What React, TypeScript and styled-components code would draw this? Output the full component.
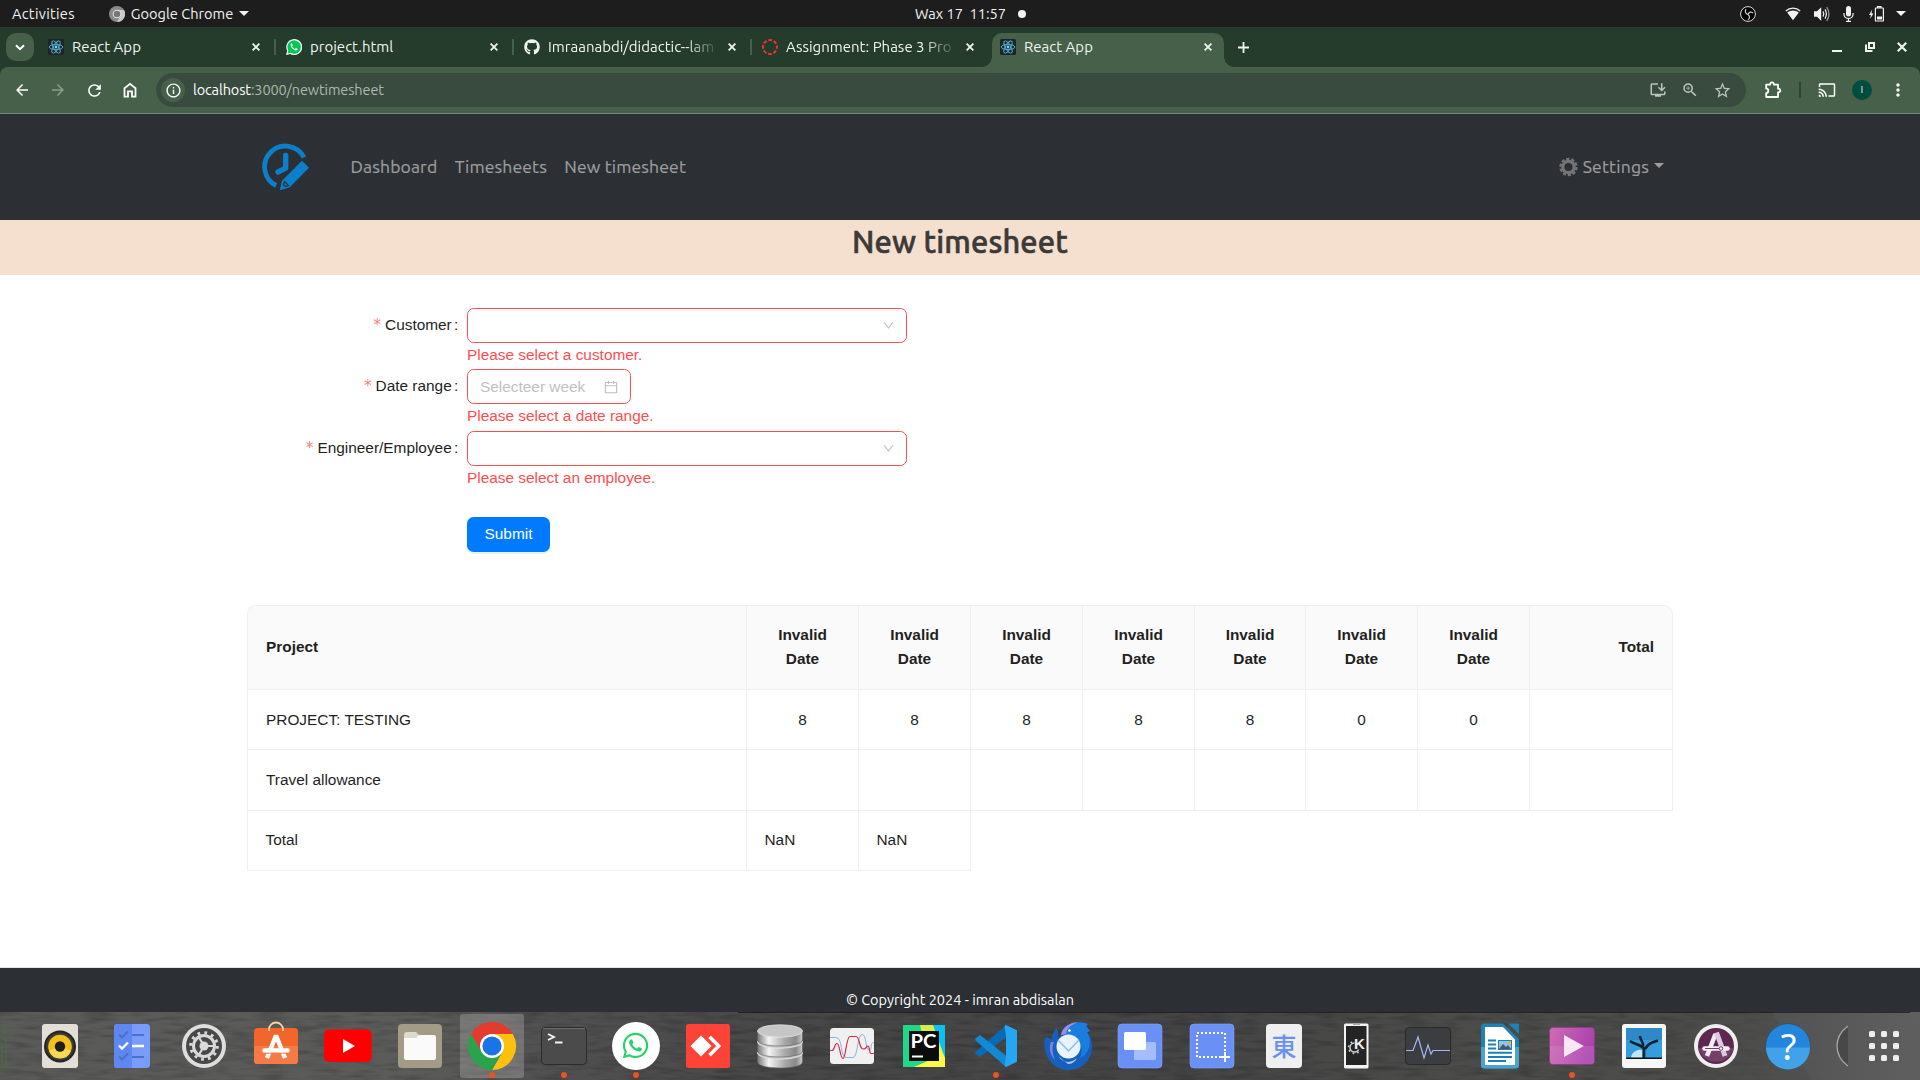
import React from "react";
import styled, { createGlobalStyle, css } from "styled-components";
import {
  MdArrowBack, MdArrowForward, MdRefresh, MdInfoOutline, MdOutlineInstallDesktop,
  MdZoomIn, MdStarBorder, MdOutlineCast, MdMoreVert,
} from "react-icons/md";
import { FaGithub, FaWhatsapp } from "react-icons/fa";
import { AiOutlineDown, AiOutlineCalendar } from "react-icons/ai";

const ui = `"Ubuntu", "Noto Sans", sans-serif`;
const sans = `"Liberation Sans", Arial, sans-serif`;

const GlobalStyle = createGlobalStyle`
  *, *::before, *::after { box-sizing: border-box; }
  html, body { margin: 0; padding: 0; background: #fff; }
  body { width: 1920px; height: 1080px; overflow: hidden; font-family: ${ui}; }
  svg { display: block; flex: none; }
`;

const Screen = styled.div`
  width: 1920px; height: 1080px; display: flex; flex-direction: column; overflow: hidden; background: #fff;
`;
const Label = styled.span<{ $s?: number }>`
  white-space: nowrap; letter-spacing: ${(p) => p.$s ?? 0}px;
`;

const TopBar = styled.header`
  height: 27px; flex: none; background: #1d1d1d; color: #f2f2f2; font-size: 14.6px; line-height: 26px;
  display: grid; grid-template-columns: 915px 1fr auto; align-items: center;
`;
const TopLeft = styled.div`display: flex; align-items: center; padding-left: 12px;`;
const AppMenu = styled.div`display: flex; align-items: center; margin-left: 34px; gap: 6px;`;
const Clock = styled.div`display: flex; align-items: center; gap: 12px;`;
const Dot = styled.i`width: 8px; height: 8px; border-radius: 50%; background: #f2f2f2;`;
const Tray = styled.div`display: flex; align-items: center; padding-right: 14px; color: #f2f2f2;`;
const Gap = styled.span<{ $w: number }>`width: ${(p) => p.$w}px; flex: none;`;

const TabStrip = styled.div`
  height: 40px; flex: none; background: #253b2b; display: flex; align-items: flex-end; padding-left: 6px; color: #f0f4f0;
`;
const TabSearch = styled.button`
  width: 28px; height: 28px; border: 0; padding: 0; border-radius: 10px; background: #466049; color: #fff;
  display: grid; place-items: center; margin: 0 6px 6px 0;
`;
const Tab = styled.div<{ $active?: boolean; $sep?: boolean }>`
  width: 232px; height: 34px; margin-right: 6px; padding: 0 8px 6px; position: relative;
  display: flex; align-items: center; font-size: 15px;
  ${(p) => p.$active && css`
    background: #466049; border-radius: 10px 10px 0 0;
    &::before, &::after { content: ""; position: absolute; bottom: 0; width: 10px; height: 10px; }
    &::before { left: -10px; background: radial-gradient(circle at 0 0, transparent 9.5px, #466049 10px); }
    &::after { right: -10px; background: radial-gradient(circle at 100% 0, transparent 9.5px, #466049 10px); }
  `}
  ${(p) => p.$sep && css`
    &::after { content: ""; position: absolute; right: -4px; top: 6px; width: 2px; height: 16px; background: #466049; }
  `}
`;
const TabTitle = styled.span<{ $fade?: boolean }>`
  width: 172px; margin-left: 8px; padding-bottom: 2px; display: flex;
  ${(p) => p.$fade && css`mask-image: linear-gradient(90deg, #000 138px, transparent 171px);`}
`;
const TabClose = styled.span`margin-left: auto; width: 16px; height: 16px; display: grid; place-items: center;`;
const NewTab = styled.span`width: 26px; height: 34px; padding-bottom: 6px; display: grid; place-items: center;`;
const WindowButtons = styled.div`
  margin-left: auto; height: 34px; width: 75px; margin-right: 13px; padding-bottom: 6px; display: flex; justify-content: space-between; align-items: center;
`;

const ToolbarWrap = styled.div`height: 47px; flex: none; background: #253b2b;`;
const Toolbar = styled.div`
  height: 47px; background: #466049; border-radius: 8px 8px 0 0; border-bottom: 1px solid #71877b;
  display: flex; align-items: center; padding-left: 4px; color: #fff;
`;
const ToolButton = styled.span<{ $dim?: boolean }>`
  width: 36px; height: 34px; flex: none; display: grid; place-items: center; color: ${(p) => (p.$dim ? "#8c9d8e" : "#fff")};
`;
const Omnibox = styled.div`
  width: 1590px; height: 34px; flex: none; margin-left: 8px; border-radius: 17px; background: #394b3e; padding: 0 8px 0 5px;
  display: flex; align-items: center; font-size: 14.5px; line-height: 34px; color: #adb7af;
`;
const SiteInfo = styled.span`
  width: 24px; height: 24px; border-radius: 50%; background: #466049; color: #fff; display: grid; place-items: center; margin-right: 8px;
`;
const Host = styled.span`color: #fff;`;
const OmniIcons = styled.span`
  margin-left: auto; display: flex; color: #bcc5bd;
  span { width: 32px; display: grid; place-items: center; }
`;
const Extras = styled.div`display: flex; align-items: center; padding-left: 17.5px;`;
const Divider = styled.i`width: 2px; height: 16px; background: #2c4632; margin: 0 17px;`;
const Avatar = styled.span`
  width: 20px; height: 20px; border-radius: 50%; background: #004d40; color: #c4d5d1; font-size: 10px; font-weight: 500; line-height: 20px; text-align: center;
  margin: 0 16px 0 16.5px;
`;

const Navbar = styled.nav`
  height: 106px; flex: none; background: #2c3034; color: #9b9d9e; font-size: 17.6px; display: flex; align-items: center; padding: 0 256px 0 262px;
`;
const NavLinks = styled.div`display: flex; gap: 17.4px; margin-left: 41.5px; flex: 1; padding-bottom: 2px; -webkit-text-stroke: 0.2px currentColor;`;
const SettingsMenu = styled.div`display: flex; align-items: center;`;
const SettingsText = styled(Label)`padding-bottom: 2px; -webkit-text-stroke: 0.2px currentColor;`;
const Caret = styled.i<{ $size?: number }>`
  width: 0; height: 0; border: ${(p) => p.$size ?? 5}px solid transparent; border-bottom: 0; border-top-color: currentColor;
`;
const MenuCaret = styled(Caret)`margin-bottom: 4px;`;
const PageTitle = styled.h2`
  margin: 0; height: 55px; flex: none; background: #f5e0d0; color: #3b3a38; font-size: 30.8px; line-height: 43px; font-weight: 500; text-align: center;
  -webkit-text-stroke: 0.6px #3b3a38;
`;

const Content = styled.main`
  flex: 1; min-height: 0; padding: 33px 247px 0; font-family: ${sans}; font-size: 15.4px; color: #1f1f1f; display: flex; flex-direction: column;
`;
const Form = styled.form`display: flex; flex-direction: column; height: 297px;`;
const FormRow = styled.div<{ $h: number }>`
  height: ${(p) => p.$h}px; flex: none; display: grid; grid-template-columns: 220px 440px; line-height: 24px;
`;
const FieldLabel = styled.label`
  height: 34px; display: flex; align-items: center; justify-content: flex-end; padding-right: 8.8px;
`;
const Star = styled.span`color: #ff4d4f; margin-right: 4px; font-family: "DejaVu Sans", sans-serif; opacity: 0.75; font-size: 15.4px;`;
const Control = styled.div<{ $w: number }>`
  width: ${(p) => p.$w}px; height: 35px; border: 1px solid #ff4d4f; border-radius: 6.6px; background: #fff;
  display: flex; align-items: center; justify-content: space-between; padding: 0 11px 0 12px; color: #bfbfbf;
`;
const ErrorText = styled.div`color: #ff4d4f;`;
const Submit = styled.button`
  margin: 24px 0 0 220px; width: 83px; height: 35px; border: 0; border-radius: 6.6px; background: #007bff; color: #fff; padding: 0 0 2px;
  font: inherit; box-shadow: 0 2px 0 rgba(5, 145, 255, 0.1);
`;

const Table = styled.table`
  width: 1426px; table-layout: fixed; border-collapse: separate; border-spacing: 0;
  border-left: 1px solid #f0f0f0; border-top: 1px solid #f0f0f0; border-radius: 8.8px 8.8px 0 0; line-height: 24px;
`;
const FirstCol = styled.col`width: 499px;`;
const DayCol = styled.col<{ $w: number }>`width: ${(p) => p.$w}px;`;
const Cell = styled.td<{ $align?: string }>`
  padding: 0 18px; height: 60px; border-right: 1px solid #f0f0f0; border-bottom: 1px solid #f0f0f0; text-align: ${(p) => p.$align ?? "left"};
`;
const HeadCell = styled(Cell).attrs({ as: "th" })`
  height: 84px; padding-bottom: 2px; background: #fafafa; font-weight: 700;
  &:first-child { border-top-left-radius: 8.8px; }
  &:last-child { border-top-right-radius: 8.8px; }
`;
const TallCell = styled(Cell)`height: 61px;`;
const SummaryCell = styled(Cell)`padding: 0 17.5px 2px;`;

const Footer = styled.footer`
  height: 45px; flex: none; background: #2c3034; border-top: 1px solid #e3e4e4; color: #fff; font-size: 14.5px; line-height: 64px; text-align: center;
`;

const Dock = styled.div`
  height: 68px; flex: none; position: relative; display: flex; overflow: hidden;
  background: linear-gradient(90deg, #5a5a59 0, #5b5b5a 420px, #505050 560px, #474747 800px, #454545 1200px, #4c4c4b 1500px, #4c4c4b 1740px, #525252 1830px, #5a5a5a 100%);
  &::before { content: ""; position: absolute; left: 738px; width: 1172px; top: 0; height: 1px; background: #242424; }
`;
const Texture = styled.svg`position: absolute; inset: 0; opacity: 0.24;`;
const DockCell = styled.div<{ $active?: boolean; $running?: boolean }>`
  width: 72px; height: 68px; position: relative; flex: none; display: grid; justify-items: center; padding-top: 10px; align-content: start;
  ${(p) => p.$active && css`&::before { content: ""; position: absolute; left: 4px; top: 2px; width: 64px; height: 64px; border-radius: 3px; background: rgba(255,255,255,0.2); }`}
  ${(p) => p.$running && css`&::after { content: ""; position: absolute; left: 33px; top: 60px; width: 6px; height: 6px; border-radius: 50%; background: #e95420; }`}
  svg { position: relative; overflow: visible; }
`;
const DockEdge = styled.div`width: 24px; flex: none; position: relative; overflow: hidden;`;
const LeftEdge = styled(DockEdge)`padding-top: 10px;`;
const AppGrid = styled.div`
  margin-left: 21px; padding-top: 19px; position: relative; display: grid; grid-template-columns: repeat(3, 6px); grid-auto-rows: 6px; gap: 6px; align-content: start;
  i { width: 6px; height: 6px; border-radius: 1.5px; background: #eee; }
`;

const ReactFavicon = () => (
  <svg width="16" height="16" viewBox="0 0 16 16">
    <rect width="16" height="16" rx="1.5" fill="#20232a" />
    <g fill="none" stroke="#53b5d0" strokeWidth="0.9">
      <ellipse cx="8" cy="8" rx="6.8" ry="2.6" />
      <ellipse cx="8" cy="8" rx="6.8" ry="2.6" transform="rotate(60 8 8)" />
      <ellipse cx="8" cy="8" rx="6.8" ry="2.6" transform="rotate(120 8 8)" />
    </g>
    <circle cx="8" cy="8" r="1.4" fill="#61dafb" />
  </svg>
);
const WhatsappFavicon = () => (
  <svg width="16" height="16" viewBox="0 0 16 16">
    <path d="M0 16 1.2 11.8A8 8 0 1 1 4.3 15Z" fill="#fff" />
    <path d="M1.5 14.6 2.4 11.5A6.7 6.7 0 1 1 4.7 13.8Z" fill="#00c853" />
    <path d="M5.6 4.2c-.7.3-1.2 1.2-.9 2.3.6 2.3 2.6 4.3 4.9 4.9 1.2.2 2.1-.4 2.2-1.3l-1.9-1-.9.9C7.8 9.500 6.6 8.3 6.1 7.1l.8-.9Z" fill="#fff" />
  </svg>
);
const CanvasFavicon = () => (
  <svg width="16" height="16" viewBox="0 0 16 16">
    <circle cx="8" cy="8" r="7" fill="none" stroke="#e8352e" strokeWidth="2" strokeDasharray="3.7 1.798" strokeDashoffset="1.85" />
  </svg>
);
const Cross = ({ size = 8, w = 1.8 }: { size?: number; w?: number }) => (
  <svg width={size} height={size} viewBox="0 0 8 8"><path d="M.6.6 7.4 7.4M7.4.6.6 7.4" stroke="currentColor" strokeWidth={w} /></svg>
);
const HomeIcon = () => (
  <svg width="14" height="16" viewBox="0 0 14 16">
    <path d="M1.5 6.2 7 1.8 12.5 6.2V14.6H9V9.4H5V14.6H1.5Z" fill="none" stroke="currentColor" strokeWidth="1.8" />
  </svg>
);
const PuzzleIcon = () => (
  <svg width="18" height="18" viewBox="0 0 18 18">
    <path d="M2.2 3.6H6.2Q6 1.4 8 1.4T9.8 3.6H14V7.7Q16.3 7.6 16.3 9.5T14 11.4V16H2.2V12.2Q4.3 11.8 4.3 9.7T2.2 7.4Z" fill="none" stroke="currentColor" strokeWidth="1.8" strokeLinejoin="round" />
  </svg>
);

const TrayIcons = () => (
  <Tray>
    <svg width="16" height="16" viewBox="0 0 16 16">
      <circle cx="8" cy="8" r="7.4" fill="#000" stroke="#ddd" strokeWidth="1" />
      <g fill="none" stroke="#ccc" strokeWidth="1.2">
        <path d="M8 8.500C5.500 8 4.500 5.500 6 3.200" />
        <path d="M8 8.500C8.700 6 11.200 5.300 13 7" />
        <path d="M8 8.500c2 1.500 2 4-.2 5.300" />
      </g>
    </svg>
    <Gap $w={29} />
    <svg width="16" height="14" viewBox="0 0 16 14">
      <path d="M.8 4C4.8.2 11.2.2 15.2 4" fill="none" stroke="#f2f2f2" strokeWidth="1.3" />
      <path d="M2.2 5.6C5.5 2.9 10.5 2.9 13.8 5.6L8 13.3Z" fill="#f2f2f2" />
    </svg>
    <Gap $w={13} />
    <svg width="16" height="16" viewBox="0 0 16 16">
      <path d="M0 5.2H3L7.2 1.2V14.8L3 10.8H0Z" fill="#f2f2f2" />
      <g fill="none" stroke="#f2f2f2" strokeWidth="1.2"><path d="M9 5.4Q10.6 8 9 10.6M11 3.4Q13.8 8 11 12.6" /><path d="M12.7 1.2Q17.3 8 12.7 14.8" opacity=".6" /></g>
    </svg>
    <Gap $w={13} />
    <svg width="11" height="16" viewBox="0 0 11 16">
      <rect x="3" y="0" width="5" height="10.5" rx="2.5" fill="#f2f2f2" />
      <path d="M1 7v1.500a4.500 4 0 0 0 9 0V7M5.500 12.500V15.300M3 15.400H8" fill="none" stroke="#f2f2f2" strokeWidth="1.2" />
    </svg>
    <Gap $w={15} />
    <svg width="16" height="16" viewBox="0 0 16 16">
      <path d="M3.2 3.5 0 9H1.9L1.2 12.8 4.5 7.4H2.5Z" fill="#f2f2f2" />
      <path d="M8.5 2V.6H12V2M7 2H13.8Q14.4 2 14.4 2.6V14.4Q14.4 15 13.8 15H7Q6.4 15 6.4 14.4V2.6Q6.4 2 7 2Z" fill="none" stroke="#f2f2f2" strokeWidth="1.2" />
      <rect x="8" y="10.5" width="5" height="3" fill="#f2f2f2" />
    </svg>
    <Gap $w={11} />
    <Caret />
  </Tray>
);

const Logo = () => (
  <svg width="47" height="48" viewBox="0 0 47 48">
    <path d="M14.2 42.5A20.8 20.8 0 1 1 42 14.5" fill="none" stroke="#0b7fcb" strokeWidth="4.8" />
    <path d="M23.7 12.5V25.2L16 29" fill="none" stroke="#0b7fcb" strokeWidth="5.4" strokeLinecap="round" strokeLinejoin="round" />
    <path d="M40 18.8 46 24.8 27.5 43.5 18.8 46.3 20.5 38.2Z" fill="#0b7fcb" stroke="#0b7fcb" strokeWidth="1.5" strokeLinejoin="round" />
    <path d="M22.6 38.6 26.4 42.400 23.4 43.6 21.4 41.6Z" fill="none" stroke="#2c3034" strokeWidth="1.3" />
  </svg>
);
const Gear = () => (
  <svg width="19" height="20" viewBox="0 0 20 20">
    <circle cx="10" cy="10" r="6" fill="none" stroke="#737577" strokeWidth="3.4" />
    <circle cx="10" cy="10" r="8.5" fill="none" stroke="#737577" strokeWidth="2.4" strokeDasharray="3.4 1.940" />
  </svg>
);

const shapes: Record<string, React.ReactNode> = {
  speaker: <>
    <rect x="6" y="2" width="36" height="44" rx="3" fill="#e3dfd6" />
    <circle cx="24" cy="24.5" r="16" fill="#23232a" /><circle cx="24" cy="24.5" r="14" fill="#3c3a35" />
    <circle cx="24" cy="24.5" r="11.8" fill="#f1c01d" /><path d="M13 29a11.800 11.800 0 0 0 22 0L24 24Z" fill="#f8d951" /><circle cx="24" cy="24.5" r="5.2" fill="#1d1d1d" />
  </>,
  todo: <>
    <rect x="6" y="2" width="36" height="44" rx="3.5" fill="#799cfa" /><path d="M9.500 2H24V46H9.500A3.500 3.500 0 0 1 6 42.500V5.500A3.500 3.500 0 0 1 9.500 2Z" fill="#5e87f2" />
    <g fill="none" strokeWidth="2"><path d="m11 12.500 3 3 6-6M24 13H36M11 34.500l3 3 6-6M24 35H36" stroke="#4c70c8" /><path d="m11 23.500 3 3 6-6M24 24H36" stroke="#fff" strokeWidth="2.3" /></g>
  </>,
  settings: <>
    <circle cx="24" cy="24" r="22" fill="#dedede" /><circle cx="24" cy="24" r="18" fill="#484848" />
    <circle cx="24" cy="24" r="10.5" fill="none" stroke="#d9d9d9" strokeWidth="3" /><circle cx="24" cy="24" r="13.3" fill="none" stroke="#d9d9d9" strokeWidth="3" strokeDasharray="2.8 4.160" />
    <circle cx="24" cy="24" r="4.5" fill="#d9d9d9" /><path d="M24 24H35M24 24 18.500 14.500M24 24 18.500 33.500" stroke="#d9d9d9" strokeWidth="2.2" />
  </>,
  software: <>
    <rect x="2" y="6" width="44" height="36" rx="3.5" fill="#f4652b" /><path d="M2 24H46V38.500A3.500 3.500 0 0 1 42.500 42H5.500A3.500 3.500 0 0 1 2 38.500Z" fill="#f57a46" />
    <path d="M17 9V7.500a7 7 0 0 1 14 0V9" fill="none" stroke="#f6d2a6" strokeWidth="1.8" />
    <path d="M15 36 24 13.500 33 36" fill="none" stroke="#fff" strokeWidth="4.5" strokeLinejoin="bevel" /><path d="M12.500 28.500H35.500" stroke="#fff" strokeWidth="4.5" strokeLinecap="round" />
    <path d="M12 31.200H36" stroke="#f57a46" strokeWidth="1" />
  </>,
  youtube: <><rect x="0" y="7.5" width="47.7" height="32.5" rx="5" fill="#fe0000" /><path d="M19 17 31 24 19 31Z" fill="#fff" /></>,
  files: <>
    <rect x="2" y="2" width="44" height="44" rx="4" fill="#a39b85" /><path d="M8 13a3 3 0 0 1 3-3H20l3 3V20H8Z" fill="#dcd9ce" />
    <path d="M8 16H20L23 13H38a2 2 0 0 1 2 2V36a2 2 0 0 1-2 2H10a2 2 0 0 1-2-2Z" fill="#fafafa" />
  </>,
  chrome: <>
    <path d="M24 24V12H44.800A24 24 0 0 1 24 48L34.400 30Z" fill="#fcc10d" />
    <path d="M3.200 12 13.600 30 34.400 30 24 48A24 24 0 0 1 3.200 12Z" fill="#2ba24c" /><path d="M24 12H44.800A24 24 0 0 0 3.200 12L13.600 30Z" fill="#e33b2e" />
    <circle cx="24" cy="24" r="12" fill="#fff" /><circle cx="24" cy="24" r="9.6" fill="#1a73e8" />
  </>,
  terminal: <><rect x="1.5" y="5.5" width="45" height="37" rx="3.5" fill="#4b4b4b" stroke="#2c2c2c" /><path d="M3 6.600H45" stroke="#777" strokeWidth=".8" /><path d="m8 12 6 3-6 3M15 20.500H22.500" fill="none" stroke="#f4f4f4" strokeWidth="1.8" /></>,
  whatsapp: <><circle cx="24" cy="24" r="24" fill="#fff" /><FaWhatsapp x="9" y="9" size={29} color="#25d366" /></>,
  anydesk: <><rect x="2" y="2" width="44" height="44" rx="2.5" fill="#fd4237" /><path d="M6.500 24 17 13.500 27.500 24 17 34.500Z" fill="#fff" /><path d="m25.500 14.800 9.200 9.200-9.200 9.200" fill="none" stroke="#fff" strokeWidth="3.6" /></>,
  database: <>
    <defs><linearGradient id="steel"><stop offset="0" stopColor="#777" /><stop offset=".25" stopColor="#f5f5f5" /><stop offset=".6" stopColor="#aaa" /><stop offset=".85" stopColor="#888" /><stop offset="1" stopColor="#ccc" /></linearGradient></defs>
    {[29, 18, 7].map((y) => <g key={y}><path d={`M1.500 ${y + 2}V${y + 11}C1.500 ${y + 19} 46.500 ${y + 19} 46.500 ${y + 11}V${y + 2}Z`} fill="url(#steel)" stroke="#5d5d5d" strokeWidth=".6" /><ellipse cx="24" cy={y + 2} rx="22.5" ry="6.2" fill="#c6c6c6" stroke="#ededed" strokeWidth=".7" /></g>)}
  </>,
  monitor: <><rect x="2" y="6" width="44" height="36" rx="3.5" fill="#f0f0f0" /><path d="M2 15.500H8C15 15.500 12 35.500 18 35.500H25C30 35.500 29 12.500 34 12.500S37 28 41 28 41 20.500 46 20.500" fill="none" stroke="#85b6e0" strokeWidth="1" /><path d="M2 28.500H4C7 28.500 6 21.500 9 21.500S12 36.500 15 36.500 18 14.500 22 14.500H28C32 14.500 31 27 35 27S38 24 40 24 41 31.500 43 31.500H46" fill="none" stroke="#d8274e" strokeWidth="1.2" /></>,
  pycharm: <>
    <rect x="3" y="3" width="42" height="42" fill="#21d789" /><path d="M20 3H34L45 32V45H30Z" fill="#d5ef48" /><path d="M33 3H45V36Z" fill="#07c3f2" /><path d="M39 25 45 36V45H14L30 38Z" fill="#fcf84a" />
    <rect x="9" y="9" width="30" height="30" fill="#0b0b0b" /><text x="10.5" y="26" fill="#fff" fontFamily="Lato, sans-serif" fontWeight="700" fontSize="18.5" textLength="26" lengthAdjust="spacingAndGlyphs">PC</text><rect x="12" y="33.5" width="11" height="2" fill="#fff" />
  </>,
  vscode: <>
    <path d="M3 30.500 34 3 36 14 8 35 3.300 31.800Z" fill="#0a6bb5" /><path d="M3.400 16.500 8 13 34.500 34 34 45 3.500 18.500Z" fill="#1189d3" /><path d="M34 3 45 8.300V39.700L34 45 32.500 44 34 34V14L32.500 4Z" fill="#26a6f2" />
  </>,
  thunderbird: <>
    <path d="M12 5.500C10 10 8 12 7.500 18 5 15 2 15 .5 17-1 36 10 48 24 48 38 48 48 38 48 25 48 18 46 13 43 10L46 9 42 4 44 2C30-2 18 3 17 13L14 17C15 12 14 8 12 5.500Z" fill="#1560bd" />
    <path d="M17 13C18 3 30-2 44 2L42 4 46 9 43 10C49 20 45 32 36 36 41 26 36 14 17 13Z" fill="#1c7de0" />
    <path d="M17 13C19 5 26 .3 34 .3 26 3 22 8 22 12Z" fill="#a58be8" /><path d="M7 20C4 27 7 34 11 38 8 30 8 24 10 20Z" fill="#7d80e3" />
    <path d="M14 34C20 42 28 41 33 36 31 40 28 42 24 42Z" fill="#9fc9f5" />
    <circle cx="24.500" cy="24.500" r="12" fill="#e8f3fd" /><path d="M14 18 24.500 29 35 18" fill="none" stroke="#8bbdea" strokeWidth="1.5" /><circle cx="25.500" cy="8.500" r="1.3" fill="#fff" />
  </>,
  windows: <><rect x="2" y="2" width="44" height="44" rx="4" fill="#6a90f6" stroke="#86a6fa" strokeWidth=".6" /><rect x="18" y="20" width="22" height="18" rx="1.5" fill="#a5bdfb" /><rect x="8" y="10" width="22" height="18" rx="1.5" fill="#fff" /></>,
  screenshot: <><rect x="2" y="2" width="44" height="44" rx="4" fill="#6a90f6" stroke="#86a6fa" strokeWidth=".6" /><rect x="9" y="11" width="28" height="24" fill="none" stroke="#fff" strokeWidth="2" strokeDasharray="2 2" /><path d="M37 30V40M32 35H42" stroke="#fff" strokeWidth="2" /></>,
  input: <><rect x="6" y="2" width="36" height="44" rx="4" fill="#efefef" /><text x="24" y="33.5" textAnchor="middle" fill="#6a90f6" fontFamily='"Noto Sans CJK JP", sans-serif' fontSize="25" fontWeight="500">東</text></>,
  phone: <><rect x="12" y="1.5" width="24.5" height="45" rx="1.5" fill="#f3f3f3" /><rect x="14" y="4" width="20.5" height="39" fill="#242424" /><rect x="21" y="1.5" width="7" height="1.5" fill="#aaa" />
    <circle cx="22.500" cy="25.500" r="4.500" fill="none" stroke="#ccc" strokeWidth="1.6" /><circle cx="22.500" cy="25.500" r="6" fill="none" stroke="#ccc" strokeWidth="1.6" strokeDasharray="1.7 3" /><rect x="22.5" y="16" width="10" height="11.5" fill="#242424" /><text x="22" y="27" fill="#f0f0f0" fontFamily={sans} fontWeight="700" fontSize="15">K</text></>,
  pulse: <><rect x="1.5" y="5.5" width="45" height="37" rx="3.5" fill="#3c3d41" stroke="#2a2a2a" /><path d="M2 28.500H9L14 15 20 36 24 23 27 32 29 28.500H46" fill="none" stroke="#a3b8f5" strokeWidth="1.2" /></>,
  writer: <>
    <path d="M8.500 1.500H27L43 17V43a3.500 3.500 0 0 1-3.500 3.500H8.500A3.500 3.500 0 0 1 5 43V5A3.500 3.500 0 0 1 8.500 1.500Z" fill="#1c83b4" /><path d="M5 25H43V43a3.500 3.500 0 0 1-3.500 3.500H8.500A3.500 3.500 0 0 1 5 43Z" fill="#49a3cc" /><path d="M32 1.500H43V12Z" fill="#1c83b4" />
    <path d="M9 5H27L39 17.500V43H9Z" fill="#fff" /><path d="M12 18.500H20M12 22.500H20M12 26.500H20M12 30.800H36M12 35H36M12 39H30" stroke="#1c7fb9" strokeWidth="2" /><rect x="22.5" y="18.5" width="13" height="9" fill="#8cc6ea" stroke="#1c7fb9" /><path d="m23 27 4-5 3 3 2-2 3 4Z" fill="#555" /><circle cx="33.500" cy="20.500" r="1.5" fill="#f5b400" />
  </>,
  player: <>
    <defs><linearGradient id="orchid" x1="0" y1="0" x2="1" y2=".3"><stop offset="0" stopColor="#cf6cb4" /><stop offset="1" stopColor="#ac41ae" /></linearGradient></defs>
    <rect x="1.5" y="5.5" width="45" height="37" rx="3.5" fill="url(#orchid)" stroke="#8d3b8d" strokeWidth=".8" /><path d="M2 24H46V40Q46 42 43 42H5Q2 42 2 40Z" fill="#fff" opacity=".1" /><path d="M16 13 35.800 24 16 35Z" fill="#f8e8f5" />
  </>,
  photos: <><rect x="2" y="2" width="44" height="44" rx="3" fill="#f7f7f7" /><rect x="6" y="6" width="36" height="31" rx="1" fill="#369ddd" /><rect x="6" y="6" width="36" height="12" fill="#2a7cbd" opacity=".6" /><path d="M11 36a9 9 0 0 1 11-8V36Z" fill="#bfe6fa" /><path d="M6 35.500H42V36Q42 37 41 37H7Q6 37 6 36Z" fill="#0d1418" /><path d="M24 36V27C21 22 15 23 10 19M23 25C24 20 20 18 20 14M25 27C28 22 30 21 38 18.500" fill="none" stroke="#10222d" strokeWidth="2.6" /></>,
  updater: <><circle cx="24" cy="24" r="22" fill="#efefef" /><circle cx="24" cy="24" r="18" fill="#5e2750" /><path d="M6.500 26H41.500A18 18 0 0 1 6.500 26Z" fill="#734068" /><path d="M15 34 23.500 12" stroke="#f2ecf2" strokeWidth="4.5" /><path d="M24.500 10.500 33 34" stroke="#dcc8e4" strokeWidth="5" /><path d="M12.500 26.500H35.500" stroke="#f6f2f6" strokeWidth="4.5" strokeLinecap="round" /><path d="M13 26.500H27" stroke="#734068" strokeWidth="1" /><circle cx="29" cy="26.500" r="1.8" fill="none" stroke="#734068" /></>,
  help: <><circle cx="24" cy="24" r="22.3" fill="#2385dc" stroke="#2b4a66" strokeWidth=".6" /><path d="M2 25.500H46A22 22 0 0 1 2 25.500Z" fill="#41a2ea" /><text x="24.5" y="37.5" textAnchor="middle" fill="#fff" fontFamily='"Noto Sans", sans-serif' fontSize="36">?</text></>,
};

const dockItems: { icon: string; active?: boolean; running?: boolean }[] = [
  { icon: "speaker" }, { icon: "todo" }, { icon: "settings" }, { icon: "software" }, { icon: "youtube" }, { icon: "files" },
  { icon: "chrome", active: true, running: true }, { icon: "terminal", running: true }, { icon: "whatsapp", running: true },
  { icon: "anydesk" }, { icon: "database" }, { icon: "monitor" }, { icon: "pycharm" }, { icon: "vscode", running: true },
  { icon: "thunderbird" }, { icon: "windows" }, { icon: "screenshot" }, { icon: "input" }, { icon: "phone" }, { icon: "pulse" },
  { icon: "writer" }, { icon: "player", running: true }, { icon: "photos" }, { icon: "updater" }, { icon: "help" },
];

const tabs = [
  { title: "React App", icon: <ReactFavicon /> },
  { title: "project.html", icon: <WhatsappFavicon /> },
  { title: "Imraanabdi/didactic--lam", icon: <FaGithub size={16} />, fade: true },
  { title: "Assignment: Phase 3 Pro", icon: <CanvasFavicon />, fade: true },
  { title: "React App", icon: <ReactFavicon />, active: true },
];

const hours = [8, 8, 8, 8, 8, 0, 0];
const dayWidths = [112, 112, 112, 112, 111, 112, 112];

export default function App() {
  return (
    <Screen>
      <GlobalStyle />
      <TopBar>
        <TopLeft>
          <Label $s={0.3}>Activities</Label>
          <AppMenu>
            <svg width="16" height="16" viewBox="0 0 16 16"><circle cx="8" cy="8" r="8" fill="#8a8a8a" /><path d="M8 4H15A8 8 0 0 1 8 16L12 9Z" fill="#c9c9c9" /><circle cx="8" cy="8" r="4.3" fill="#e6e6e6" /><circle cx="8" cy="8" r="3.3" fill="#777" /></svg>
            <Label>Google Chrome</Label>
            <Caret />
          </AppMenu>
        </TopLeft>
        <Clock><Label>Wax 17&nbsp; 11:57</Label><Dot /></Clock>
        <TrayIcons />
      </TopBar>

      <TabStrip>
        <TabSearch><svg width="10" height="7" viewBox="0 0 10 7"><path d="m1 1.200 4 4 4-4" fill="none" stroke="currentColor" strokeWidth="2" /></svg></TabSearch>
        {tabs.map((t, i) => (
          <Tab key={i} $active={t.active} $sep={i < 3}>
            {t.icon}
            <TabTitle $fade={t.fade}><Label>{t.title}</Label></TabTitle>
            <TabClose><Cross /></TabClose>
          </Tab>
        ))}
        <NewTab><svg width="11" height="11" viewBox="0 0 11 11"><path d="M5.500 0V11M0 5.500H11" stroke="currentColor" strokeWidth="1.8" /></svg></NewTab>
        <WindowButtons>
          <svg width="10" height="10" viewBox="0 0 10 10"><path d="M0 9H10" stroke="currentColor" strokeWidth="2" /></svg>
          <svg width="10" height="10" viewBox="0 0 10 10"><path d="M4 1H9V6H4ZM1 2.500V9H7.500" fill="none" stroke="currentColor" strokeWidth="2" /></svg>
          <Cross size={10} w={1.7} />
        </WindowButtons>
      </TabStrip>

      <ToolbarWrap>
        <Toolbar>
          <ToolButton><MdArrowBack size={18} /></ToolButton>
          <ToolButton $dim><MdArrowForward size={18} /></ToolButton>
          <ToolButton><MdRefresh size={19} /></ToolButton>
          <ToolButton><HomeIcon /></ToolButton>
          <Omnibox>
            <SiteInfo><MdInfoOutline size={17} /></SiteInfo>
            <Label $s={-0.12}><Host>localhost</Host>:3000/newtimesheet</Label>
            <OmniIcons>
              <span><MdOutlineInstallDesktop size={18} /></span>
              <span><MdZoomIn size={18} /></span>
              <span><MdStarBorder size={19} /></span>
            </OmniIcons>
          </Omnibox>
          <Extras>
            <PuzzleIcon />
            <Divider />
            <MdOutlineCast size={18} />
            <Avatar>I</Avatar>
            <MdMoreVert size={20} />
          </Extras>
        </Toolbar>
      </ToolbarWrap>

      <Navbar>
        <Logo />
        <NavLinks><Label $s={0.12}>Dashboard</Label><Label $s={0.12}>Timesheets</Label><Label $s={0.12}>New timesheet</Label></NavLinks>
        <SettingsMenu><Gear /><Gap $w={4.5} /><SettingsText $s={0.18}>Settings</SettingsText><Gap $w={5} /><MenuCaret /></SettingsMenu>
      </Navbar>
      <PageTitle><Label $s={0.12}>New timesheet</Label></PageTitle>

      <Content>
        <Form>
          <FormRow $h={61}>
            <FieldLabel><Star>*</Star>Customer<Gap $w={2.2} />:</FieldLabel>
            <div><Control $w={440}><span /><AiOutlineDown size={13} /></Control><ErrorText>Please select a customer.</ErrorText></div>
          </FormRow>
          <FormRow $h={62}>
            <FieldLabel><Star>*</Star>Date range<Gap $w={2.2} />:</FieldLabel>
            <div><Control $w={164}>Selecteer week<AiOutlineCalendar size={16} /></Control><ErrorText>Please select a date range.</ErrorText></div>
          </FormRow>
          <FormRow $h={62}>
            <FieldLabel><Star>*</Star>Engineer/Employee<Gap $w={2.2} />:</FieldLabel>
            <div><Control $w={440}><span /><AiOutlineDown size={13} /></Control><ErrorText>Please select an employee.</ErrorText></div>
          </FormRow>
          <Submit type="button">Submit</Submit>
        </Form>

        <Table>
          <colgroup>
            <FirstCol />
            {dayWidths.map((w, i) => <DayCol key={i} $w={w} />)}
            <col />
          </colgroup>
          <thead>
            <tr>
              <HeadCell>Project</HeadCell>
              {hours.map((_, i) => <HeadCell key={i} $align="center">Invalid Date</HeadCell>)}
              <HeadCell $align="right">Total</HeadCell>
            </tr>
          </thead>
          <tbody>
            <tr><Cell>PROJECT: TESTING</Cell>{hours.map((h, i) => <Cell key={i} $align="center">{h}</Cell>)}<Cell /></tr>
            <tr><TallCell>Travel allowance</TallCell>{hours.map((_, i) => <TallCell key={i} />)}<TallCell /></tr>
            <tr><SummaryCell>Total</SummaryCell><SummaryCell>NaN</SummaryCell><SummaryCell>NaN</SummaryCell></tr>
          </tbody>
        </Table>
      </Content>

      <Footer><Label>© Copyright 2024 - imran abdisalan</Label></Footer>

      <Dock>
        <Texture width="1920" height="68">
          <filter id="grain" x="0" y="0" width="100%" height="100%">
            <feTurbulence type="fractalNoise" baseFrequency="0.035 0.22" numOctaves="2" seed="4" />
            <feColorMatrix values="0 0 0 0 0  0 0 0 0 0  0 0 0 0 0  1.8 0 0 0 -0.75" />
          </filter>
          <linearGradient id="fade"><stop offset=".85" stopColor="#fff" /><stop offset=".95" stopColor="#000" /></linearGradient>
          <mask id="worn"><rect width="1920" height="68" fill="url(#fade)" /></mask>
          <g mask="url(#worn)"><rect width="1920" height="68" filter="url(#grain)" /></g>
          <path d="M1772 0H1920V68H1812Z" fill="#fff" opacity=".12" />
        </Texture>
        <LeftEdge><svg width="8" height="48" viewBox="0 0 8 48"><path d="M0 3H6V10H0M0 14Q6 16 6 22V45H0M0 26H2V42" fill="none" stroke="#48713f" strokeWidth="1.5" opacity=".7" /></svg></LeftEdge>
        {dockItems.map((d) => (
          <DockCell key={d.icon} $active={d.active} $running={d.running}>
            <svg width="48" height="48" viewBox="0 0 48 48">{shapes[d.icon]}</svg>
          </DockCell>
        ))}
        <DockEdge><svg width="24" height="68" viewBox="0 0 24 68"><path d="M24 14Q13 22 13 34T24 54Z" fill="#484848" /><path d="M24 14Q13 22 13 34T24 54" fill="none" stroke="#a8a8a8" strokeWidth="1.3" /></svg></DockEdge>
        <AppGrid>{Array.from({ length: 9 }, (_, i) => <i key={i} />)}</AppGrid>
      </Dock>
    </Screen>
  );
}
